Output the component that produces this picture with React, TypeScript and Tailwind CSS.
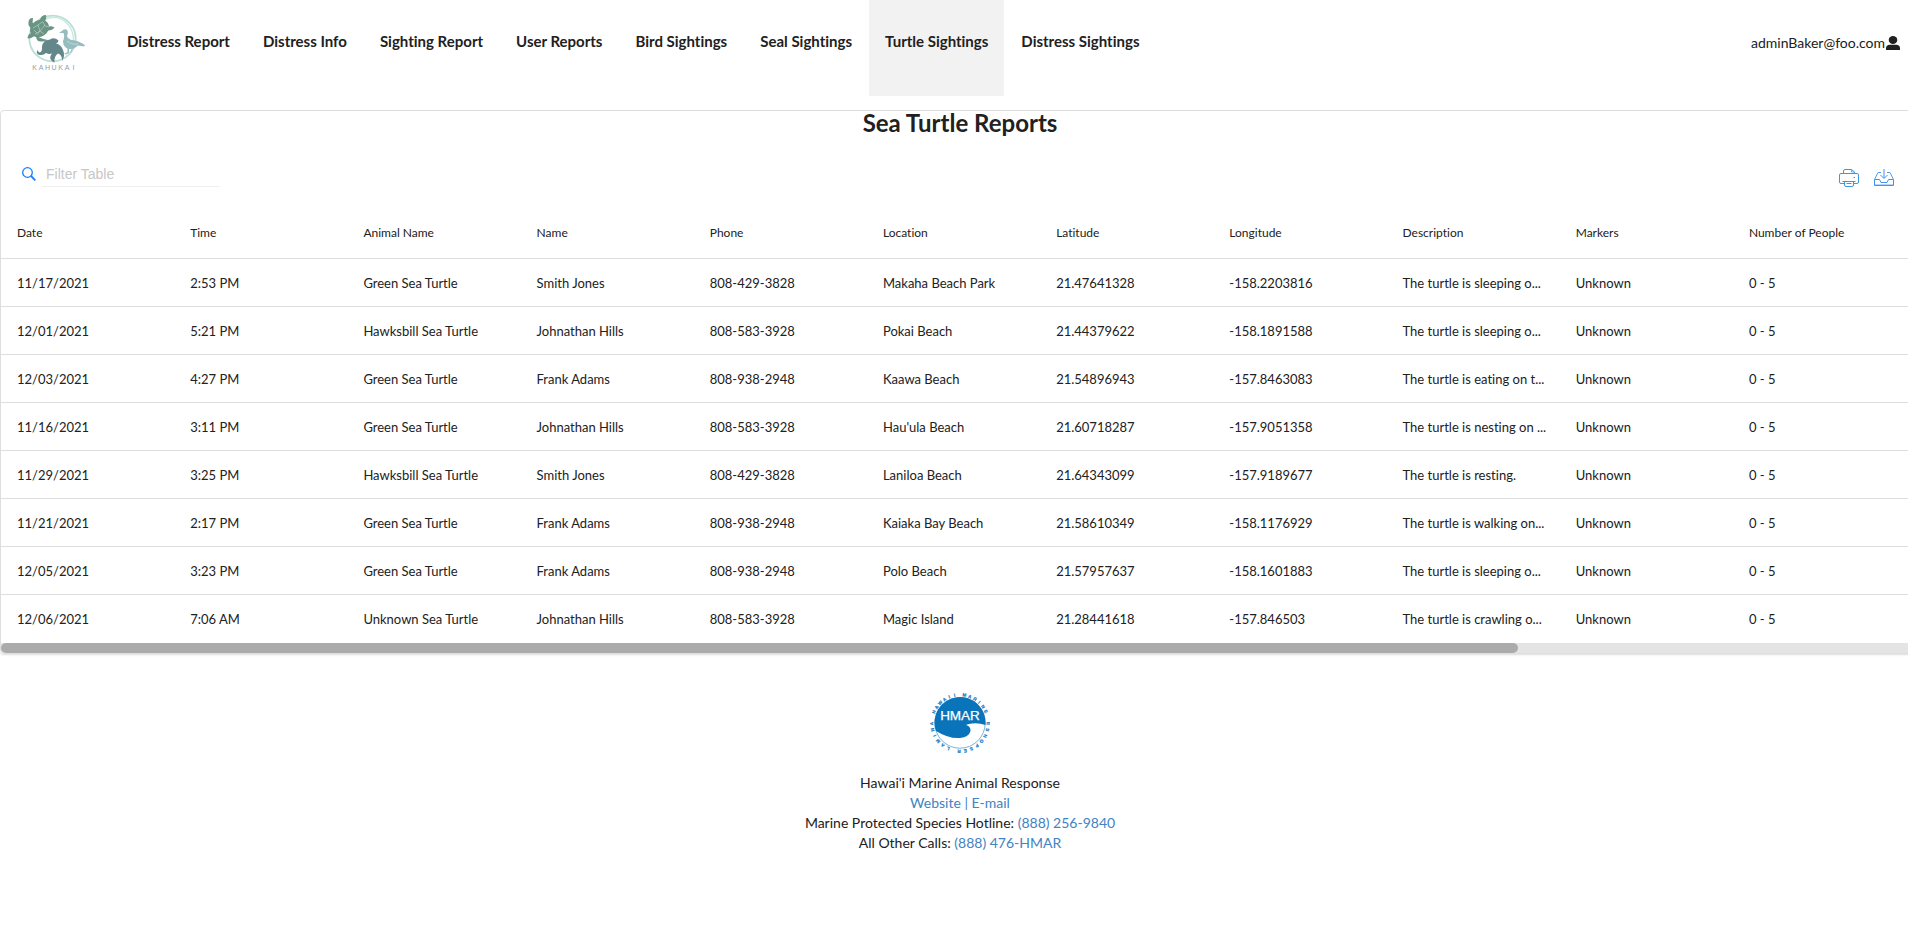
import { Fragment } from "react";

const navItems = [
  "Distress Report",
  "Distress Info",
  "Sighting Report",
  "User Reports",
  "Bird Sightings",
  "Seal Sightings",
  "Turtle Sightings",
  "Distress Sightings",
];

const columns = [
  "Date",
  "Time",
  "Animal Name",
  "Name",
  "Phone",
  "Location",
  "Latitude",
  "Longitude",
  "Description",
  "Markers",
  "Number of People",
];

const rows = [
  ["11/17/2021", "2:53 PM", "Green Sea Turtle", "Smith Jones", "808-429-3828", "Makaha Beach Park", "21.47641328", "-158.2203816", "The turtle is sleeping o...", "Unknown", "0 - 5"],
  ["12/01/2021", "5:21 PM", "Hawksbill Sea Turtle", "Johnathan Hills", "808-583-3928", "Pokai Beach", "21.44379622", "-158.1891588", "The turtle is sleeping o...", "Unknown", "0 - 5"],
  ["12/03/2021", "4:27 PM", "Green Sea Turtle", "Frank Adams", "808-938-2948", "Kaawa Beach", "21.54896943", "-157.8463083", "The turtle is eating on t...", "Unknown", "0 - 5"],
  ["11/16/2021", "3:11 PM", "Green Sea Turtle", "Johnathan Hills", "808-583-3928", "Hau'ula Beach", "21.60718287", "-157.9051358", "The turtle is nesting on ...", "Unknown", "0 - 5"],
  ["11/29/2021", "3:25 PM", "Hawksbill Sea Turtle", "Smith Jones", "808-429-3828", "Laniloa Beach", "21.64343099", "-157.9189677", "The turtle is resting.", "Unknown", "0 - 5"],
  ["11/21/2021", "2:17 PM", "Green Sea Turtle", "Frank Adams", "808-938-2948", "Kaiaka Bay Beach", "21.58610349", "-158.1176929", "The turtle is walking on...", "Unknown", "0 - 5"],
  ["12/05/2021", "3:23 PM", "Green Sea Turtle", "Frank Adams", "808-938-2948", "Polo Beach", "21.57957637", "-158.1601883", "The turtle is sleeping o...", "Unknown", "0 - 5"],
  ["12/06/2021", "7:06 AM", "Unknown Sea Turtle", "Johnathan Hills", "808-583-3928", "Magic Island", "21.28441618", "-157.846503", "The turtle is crawling o...", "Unknown", "0 - 5"],
];

function KahukaiLogo() {
  return (
    <svg viewBox="0 0 90 80" className="h-20 w-[90px]" role="img" aria-label="Kahukai">
      <ellipse cx="42.5" cy="38.5" rx="23.2" ry="22.8" fill="none" stroke="#b9e0d6" strokeWidth="1.8" />
      <path d="M33 20 Q50 12 60 27 Q66 38 62 46" fill="none" stroke="#c9e8e0" strokeWidth="1.4" />
      {/* turtle */}
      <g fill="#6a9484">
        <ellipse cx="29.5" cy="28.5" rx="10" ry="8.3" transform="rotate(-32 29.5 28.5)" />
        <path d="M21 28 Q17 25 19 20 Q20 17.500 23 18 Q22 22 23.500 25Z" />
        <path d="M30 20 Q31 15 36 15 Q37 18 35 21Z" />
        <path d="M37 27 Q41 25.500 44.500 27.500 Q42 31 37 30.500Z" />
        <path d="M23 33 Q18 33 17.500 38 Q20 39.500 24.500 36Z" />
        <path d="M26 36 Q32 39 38 40 Q34 42.500 28 41Q26 39 26 36Z" />
      </g>
      <path
        d="M23 28 L28 25 L33 21.500 M25 34 L30 31 L35 25 M28 25 L30 31 L34 34 M24 30 L27 33 M33 22 L35 26 L39 27 M30 31 L27 35"
        fill="none"
        stroke="#c3d9cf"
        strokeWidth="0.6"
      />
      {/* bird */}
      <g fill="#96bcc0">
        <path d="M49 33 L52.500 30.500 Q55 28 57.500 30.500 Q58.500 33 57 36 Q58 39 62 40 Q68 40.500 75 45 L74 46.500 L68 45.500 Q64 49.500 59 49 Q53 47.500 53 41 Q55 36 53.500 33Z" />
        <path d="M57.500 48 L59 48 L59 53 L56 54.500 L54 54 L57.500 52Z M62 47 L63.200 47 L61.500 52 L59 53 L61 51Z" />
      </g>
      <path d="M57 41 Q61 45 68 44" fill="none" stroke="#cfe3e4" strokeWidth="0.7" />
      {/* seal */}
      <path
        d="M48.500 40.500 Q44 36.500 40 39.500 Q33 40 32 46.500 Q32.500 52 29.500 52.500 Q27.500 51.500 28 50 Q25.500 52 28 54.500 Q33 56 36 53 Q39 54.500 42 53.500 Q39 57 41 60 Q43 62 44.500 62.500 Q44 56 48 53.500 Q52.500 55 52 61 Q55.500 56 53 50 Q51 44.500 46 43.500 Q48.500 42.500 48.500 40.500Z"
        fill="#64878a"
      />
      <g fill="#8e9fa6" fontFamily="'Liberation Sans', sans-serif" fontSize="7" textAnchor="middle">
        {"KAHUKAI".split("").map((letter, i) => (
          <text key={i} x={24.5 + i * 6.5} y="70">
            {letter}
          </text>
        ))}
      </g>
    </svg>
  );
}

function arc(word: string, start: number, step: number) {
  return word.split("").map((letter, i) => ({ letter, angle: start + i * step }));
}

const ringLetters = [
  ...arc("HAWAII", -67, 11.2),
  ...arc("MARINE", 9, 11.4),
  ...arc("ANIMAL", -91, -12.8),
  ...arc("RESPONSE", -178, -13),
];

function HmarLogo() {
  return (
    <svg viewBox="0 0 60 60" className="size-[60px]" role="img" aria-label="HMAR">
      <circle cx="30" cy="30" r="25.2" fill="#fff" stroke="#5a9fd0" strokeWidth="0.8" />
      <path
        d="M6 38 A25.500 25.500 0 1 1 55.400 32 Q47 29 39 31 Q37 31.500 36 32 Q41 33.500 40.500 38 Q39 44 30 45 Q19 46 6 38Z"
        fill="#0a74bb"
      />
      <text x="30" y="27" textAnchor="middle" fill="#fff" fontFamily="'Liberation Sans', sans-serif" fontSize="13.5" stroke="#fff" strokeWidth="0.25">
        HMAR
      </text>
      <g
        fill="#1478bd"
        stroke="#1478bd"
        strokeWidth="0.2"
        fontFamily="'Liberation Sans', sans-serif"
        fontWeight="bold"
        fontSize="4.6"
        textAnchor="middle"
      >
        {ringLetters.map(({ letter, angle }, i) => (
          <text key={i} x="30" y="3.3" transform={`rotate(${angle} 30 30)`}>
            {letter}
          </text>
        ))}
      </g>
    </svg>
  );
}

function SearchIcon() {
  return (
    <svg viewBox="0 0 14 14" className="size-[14px]" fill="none" stroke="#1a7efb" aria-hidden="true">
      <circle cx="5.500" cy="5.500" r="4.800" strokeWidth="1.300" />
      <path d="M9 9 L13.300 13.300" strokeWidth="1.800" />
    </svg>
  );
}

function PrinterIcon() {
  return (
    <svg viewBox="0 0 20 18" className="h-[18px] w-5" fill="none" stroke="#3a9bdc" aria-hidden="true">
      <path d="M4.500 4.500 V2 Q4.500 0.500 6 0.500 H12.500 L15.500 3 V4.500" />
      <path d="M12.500 0.500 V3 H15.500" strokeWidth="0.7" />
      <path d="M5 14.500 H2 Q0.500 14.500 0.500 13 V6 Q0.500 4.500 2 4.500 H18 Q19.500 4.500 19.500 6 V13 Q19.500 14.500 18 14.500 H15" />
      <path d="M3.500 12.500 H16.500 M5.500 12.500 V16 Q5.500 17.500 7 17.500 H13 Q14.500 17.500 14.500 16 V12.500 M7.500 14.500 H12.500" />
      <path d="M14.500 8.500 H16" />
    </svg>
  );
}

function DownloadIcon() {
  return (
    <svg viewBox="0 0 20 18" className="h-[18px] w-5" fill="none" stroke="#3f93f5" aria-hidden="true">
      <path d="M0.500 10.500 H5.500 L7 13.500 H13 L14.500 10.500 H19.500 V16.500 H0.500 Z" />
      <path d="M0.500 10.500 L4 3.500 H7 M13 3.500 H16 L19.500 10.500" strokeWidth="0.9" />
      <path d="M10 0 V9 M6.500 6 L10 9.500 L13.500 6" />
      <path d="M0.500 15.500 H19.500" strokeWidth="0.4" />
    </svg>
  );
}

function UserIcon() {
  return (
    <svg viewBox="0 0 14 14" className="size-[14px]" fill="#212121" aria-hidden="true">
      <ellipse cx="7" cy="4" rx="4.300" ry="4" />
      <path d="M0 14 V12.500 Q0 8.800 4 8.800 H10 Q14 8.800 14 12.500 V14Z" />
    </svg>
  );
}

export default function App() {
  return (
    <div className="min-h-screen overflow-x-hidden bg-white font-['Lato',sans-serif] text-sm text-[#212121] [font-variant-ligatures:no-common-ligatures]">
      <div className="w-[calc(100%+12px)]">
        <header className="flex h-24 items-start pr-5">
          <a href="#home" className="mr-[11px] block pl-[10px]">
            <KahukaiLogo />
          </a>
          <nav className="flex h-full gap-px">
            {navItems.map((item) => (
              <a
                key={item}
                href="#nav"
                className={
                  item === "Turtle Sightings"
                    ? "h-full bg-[#f2f2f2] px-4 pt-[31px] text-[15px] leading-5 font-bold whitespace-nowrap"
                    : "h-full px-4 pt-[31px] text-[15px] leading-5 font-bold whitespace-nowrap"
                }
              >
                {item}
              </a>
            ))}
          </nav>
          <button className="mt-8 ml-auto flex items-center gap-px leading-[22px]">
            adminBaker@foo.com
            <UserIcon />
          </button>
        </header>

        <main className="mt-[14px] rounded border border-[#dededf] shadow-[0_1px_2px_rgba(34,36,38,0.15)]">
          <h1 className="text-center text-2xl leading-6 font-bold">Sea Turtle Reports</h1>

          <div className="flex h-[72px] items-center justify-between pt-[6px] pr-[25px] pl-[21px]">
            <label className="flex items-center gap-[6px]">
              <SearchIcon />
              <input
                type="text"
                aria-label="Filter Table"
                placeholder="Filter Table"
                className="h-[26px] w-[178px] border-b border-[#f0f0f0] px-1 font-['Liberation_Sans',sans-serif] text-sm outline-none placeholder:text-[#c7c7c7]"
              />
            </label>
            <div className="flex gap-[15px] pt-2">
              <button aria-label="Print">
                <PrinterIcon />
              </button>
              <button aria-label="Download">
                <DownloadIcon />
              </button>
            </div>
          </div>

          <table className="w-full table-fixed text-left">
            <thead>
              <tr className="h-[51px] border-b border-[#dededf] text-xs">
                {columns.map((column, i) => (
                  <th
                    key={column}
                    scope="col"
                    className={i < 10 ? "w-[9.03%] px-4 pt-[2px] font-normal" : "px-4 pt-[2px] font-normal"}
                  >
                    {column}
                  </th>
                ))}
              </tr>
            </thead>
            <tbody>
              {rows.map((row, r) => (
                <tr key={r} className="h-12 border-b border-[#dededf] text-[13px] last:h-[49px] last:border-b-0">
                  {row.map((cell, c) => (
                    <td key={c} className="overflow-hidden px-4 pt-[2px] whitespace-nowrap">
                      {cell}
                    </td>
                  ))}
                </tr>
              ))}
            </tbody>
          </table>

          <div className="h-[10px] bg-[#e4e4e4]">
            <div className="h-full w-[79.1%] rounded-full bg-[#ababab]" />
          </div>
        </main>

        <footer className="mt-[39px] flex flex-col items-center leading-5">
          <HmarLogo />
          <div className="mt-5 text-center">
            <p>Hawai'i Marine Animal Response</p>
            <p className="text-[#4183c4]">
              <a href="#website">Website</a> | <a href="#email">E-mail</a>
            </p>
            {[
              ["Marine Protected Species Hotline:", "(888) 256-9840"],
              ["All Other Calls:", "(888) 476-HMAR"],
            ].map(([label, phone]) => (
              <Fragment key={label}>
                <p>
                  {label}{" "}
                  <a href="#call" className="text-[#4183c4]">
                    {phone}
                  </a>
                </p>
              </Fragment>
            ))}
          </div>
        </footer>
      </div>
    </div>
  );
}
